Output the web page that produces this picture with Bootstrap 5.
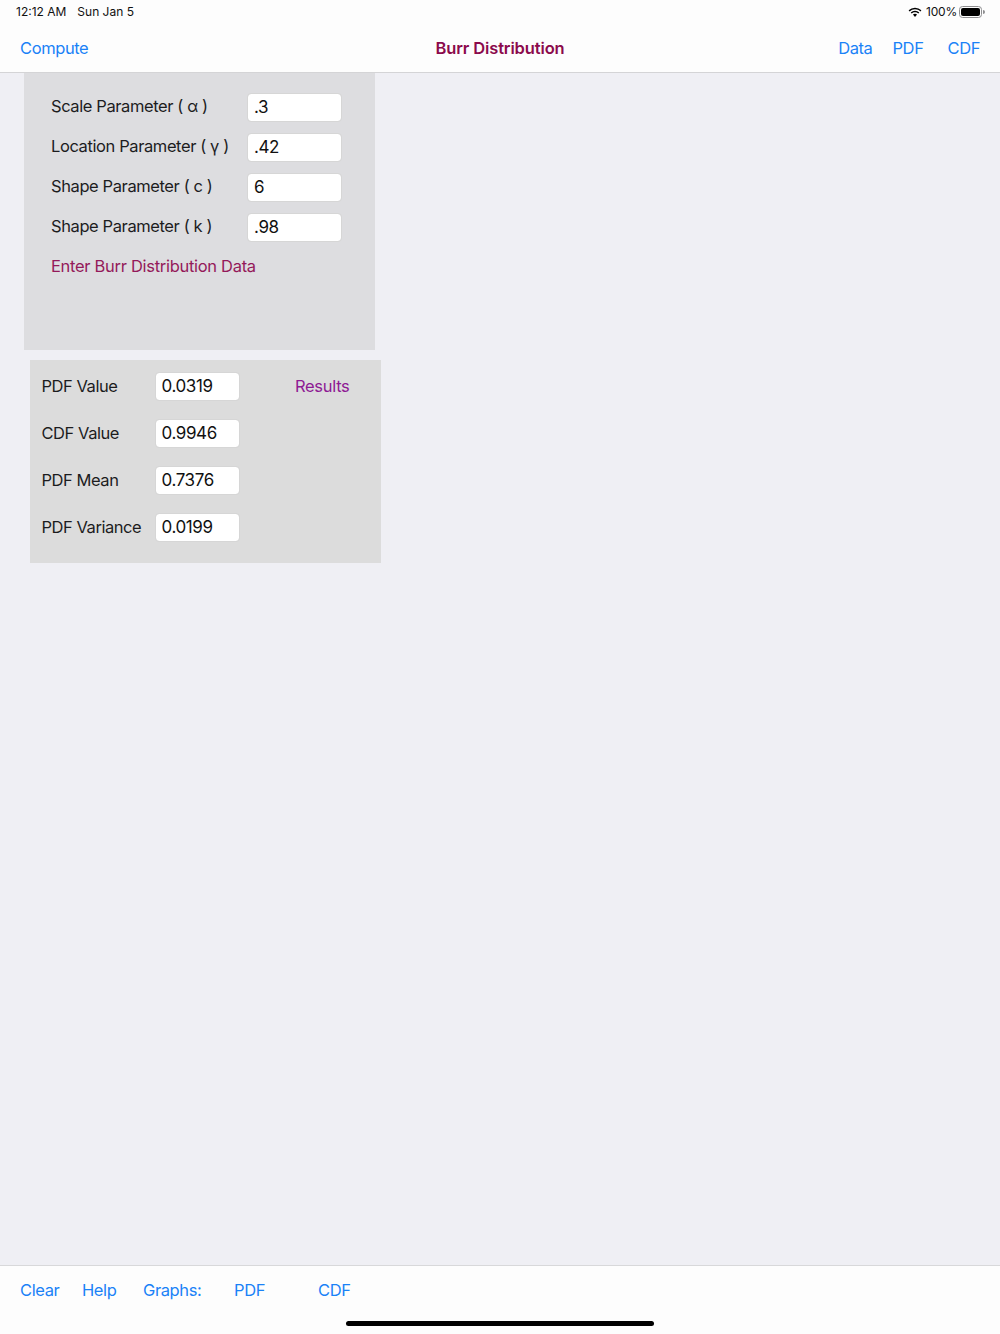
<!DOCTYPE html>
<html lang="en">
<head>
    <meta charset="UTF-8">
    <meta name="viewport" content="width=device-width, initial-scale=1.0">
    <title>Burr Distribution</title>
    <link href="https://cdn.jsdelivr.net/npm/bootstrap@5.3.0/dist/css/bootstrap.min.css" rel="stylesheet">
    <style>
        html, body {
            height: 100%;
        }
        body {
            font-family: Inter, "Liberation Sans", sans-serif;
            font-size: 16.5px;
            letter-spacing: -0.3px;
            line-height: 20px;
            background-color: #efeff4;
            color: #1c1c1e;
        }
        .app-frame {
            height: 1334px;
        }
        .top-bar {
            height: 73px;
            background-color: #fdfdfd;
            border-bottom: 1px solid #d4d4d6;
        }
        .status-row {
            height: 24px;
            padding: 0 15px 0 16px;
            font-size: 12px;
            letter-spacing: 0;
            color: #111;
        }
        .status-date {
            margin-left: 11px;
        }
        .status-level {
            letter-spacing: -0.2px;
        }
        .status-wifi {
            margin-right: 4px;
        }
        .battery-box {
            width: 23px;
            height: 12px;
            margin-left: 2px;
            padding: 1px;
            border: 1px solid #8e8e90;
            border-radius: 3.5px;
        }
        .battery-fill {
            height: 100%;
            background-color: #000;
            border-radius: 2px;
        }
        .battery-tip {
            width: 2px;
            height: 4px;
            margin-left: 1px;
            background-color: #8e8e90;
            border-radius: 0 2px 2px 0;
        }
        .title-row {
            display: grid;
            grid-template-columns: 1fr auto 1fr;
            height: 48px;
            padding: 0 20px;
        }
        .title-text {
            font-weight: 600;
            letter-spacing: -0.12px;
            color: #8b0a4c;
        }
        .ios-link {
            color: #1a82f7;
            letter-spacing: -0.4px;
            text-decoration: none;
        }
        .right-links {
            justify-content: flex-end;
        }
        .link-data {
            margin-right: 20px;
        }
        .link-pdf {
            margin-right: 24px;
        }
        .data-panel {
            width: 351px;
            height: 277px;
            margin-left: 24px;
            padding: 20px 33px 0 27px;
            background-color: #dddde0;
        }
        .data-row {
            height: 29px;
            margin-bottom: 11px;
        }
        .data-row span {
            padding-bottom: 4px;
            letter-spacing: -0.4px;
        }
        .field-input {
            width: 95px;
            height: 29px;
            padding: 0 6px 2px;
            font-size: 17px;
            letter-spacing: -0.4px;
            color: #111;
            border: 1px solid #d6d6d6;
            border-radius: 4px;
        }
        .data-row .field-input {
            margin-left: auto;
        }
        .prompt-text {
            margin-top: 14px;
            color: #94195a;
        }
        .result-panel {
            width: 351px;
            height: 203px;
            margin: 10px 0 0 29.5px;
            padding: 12px 31px 0 12px;
            background-color: #dcdcdc;
        }
        .result-row {
            height: 29px;
            margin-bottom: 18px;
        }
        .result-label {
            width: 113px;
            padding-bottom: 2px;
            letter-spacing: -0.45px;
        }
        .result-row .field-input {
            width: 85px;
        }
        .results-text {
            margin-left: auto;
            padding-bottom: 2px;
            color: #8e1a94;
        }
        .bottom-bar {
            height: 69px;
            background-color: #fdfdfd;
            border-top: 1px solid #d8d8da;
        }
        .tool-row {
            height: 48px;
            padding-left: 20px;
        }
        .tool-clear { width: 62px; }
        .tool-help { width: 61px; }
        .tool-graphs { width: 91px; }
        .tool-pdf { width: 84px; }
        .home-bar {
            width: 308px;
            height: 5px;
            margin: 7px auto 0;
            background-color: #000;
            border-radius: 3px;
        }
    </style>
</head>
<body>
    <div class="app-frame d-flex flex-column">
        <!-- top bars -->
        <header class="top-bar">
            <div class="status-row d-flex align-items-center">
                <span>12:12 AM</span>
                <span class="status-date">Sun Jan 5</span>
                <svg class="ms-auto status-wifi" width="14" height="11" viewBox="0 0 14 11">
                    <path d="M7 2.2c2.1 0 4 .8 5.4 2.2l1-1.1A9.2 9.2 0 0 0 7 .7 9.2 9.2 0 0 0 .6 3.3l1 1.1A7.7 7.7 0 0 1 7 2.2z" fill="#000"/>
                    <path d="M7 5.2c1.3 0 2.4.5 3.3 1.3l1-1.1A6.3 6.3 0 0 0 7 3.7a6.3 6.3 0 0 0-4.3 1.7l1 1.1C4.600 5.700 5.700 5.200 7 5.200z" fill="#000"/>
                    <path d="M7 6.700c-.8 0-1.500.3-2 .8L7 10l2-2.500c-.5-.5-1.200-.8-2-.8z" fill="#000"/>
                </svg>
                <span class="status-level">100%</span>
                <div class="battery-box"><div class="battery-fill"></div></div>
                <div class="battery-tip"></div>
            </div>
            <div class="title-row align-items-center">
                <div><a class="ios-link" href="#">Compute</a></div>
                <div class="title-text">Burr Distribution</div>
                <div class="right-links d-flex">
                    <a class="ios-link link-data" href="#">Data</a>
                    <a class="ios-link link-pdf" href="#">PDF</a>
                    <a class="ios-link" href="#">CDF</a>
                </div>
            </div>
        </header>

        <main class="flex-grow-1">
            <!-- input panel -->
            <section class="data-panel">
                <div class="data-row d-flex align-items-center">
                    <span>Scale Parameter ( α )</span>
                    <input class="form-control field-input" type="text" value=".3">
                </div>
                <div class="data-row d-flex align-items-center">
                    <span>Location Parameter ( γ )</span>
                    <input class="form-control field-input" type="text" value=".42">
                </div>
                <div class="data-row d-flex align-items-center">
                    <span>Shape Parameter ( c )</span>
                    <input class="form-control field-input" type="text" value="6">
                </div>
                <div class="data-row d-flex align-items-center">
                    <span>Shape Parameter ( k )</span>
                    <input class="form-control field-input" type="text" value=".98">
                </div>
                <div class="prompt-text">Enter Burr Distribution Data</div>
            </section>

            <!-- results panel -->
            <section class="result-panel">
                <div class="result-row d-flex align-items-center">
                    <span class="result-label">PDF Value</span>
                    <input class="form-control field-input" type="text" value="0.0319">
                    <span class="results-text">Results</span>
                </div>
                <div class="result-row d-flex align-items-center">
                    <span class="result-label">CDF Value</span>
                    <input class="form-control field-input" type="text" value="0.9946">
                </div>
                <div class="result-row d-flex align-items-center">
                    <span class="result-label">PDF Mean</span>
                    <input class="form-control field-input" type="text" value="0.7376">
                </div>
                <div class="result-row d-flex align-items-center">
                    <span class="result-label">PDF Variance</span>
                    <input class="form-control field-input" type="text" value="0.0199">
                </div>
            </section>
        </main>

        <footer class="bottom-bar">
            <div class="tool-row d-flex align-items-center">
                <a class="ios-link tool-clear" href="#">Clear</a>
                <a class="ios-link tool-help" href="#">Help</a>
                <a class="ios-link tool-graphs" href="#">Graphs:</a>
                <a class="ios-link tool-pdf" href="#">PDF</a>
                <a class="ios-link" href="#">CDF</a>
            </div>
            <div class="home-bar"></div>
        </footer>
    </div>
    <script src="https://cdn.jsdelivr.net/npm/bootstrap@5.3.0/dist/js/bootstrap.bundle.min.js"></script>
</body>
</html>
